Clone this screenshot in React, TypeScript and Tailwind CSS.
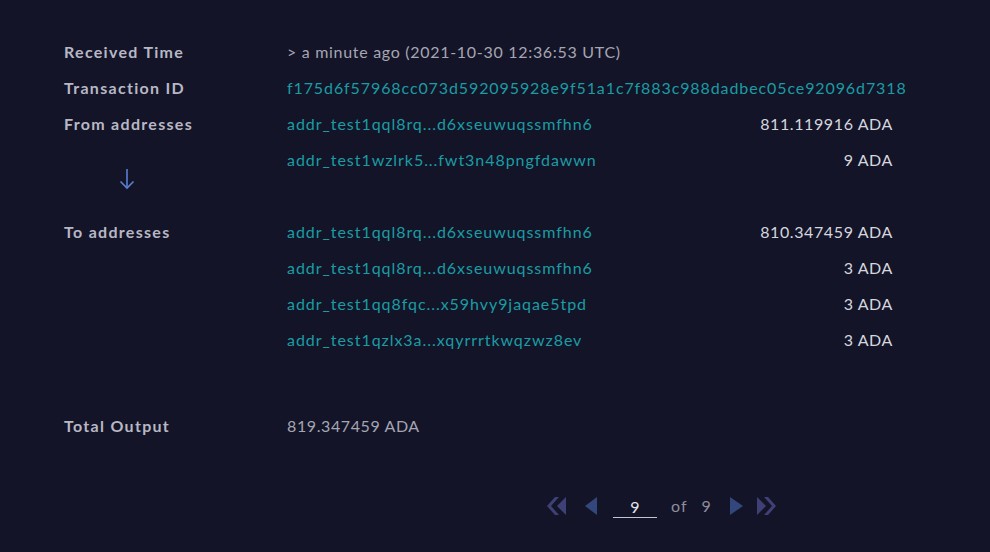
import React from "react";

const font = { fontFamily: "Lato, 'Open Sans', sans-serif" };

function Row({ addr, amount }: { addr: string; amount: string }) {
  return (
    <div className="flex h-9 items-center justify-between">
      <span className="text-[#1b9ca3] tracking-[0.95px]">{addr}</span>
      <span className="text-[#d6d6de] tracking-[0.6px]">{amount}</span>
    </div>
  );
}

function DoubleLeft() {
  return (
    <svg width="20" height="20" viewBox="0 0 20 20">
      <polygon points="9,1 13,1 5,10 13,19 9,19 1,10" fill="#3f4075" />
      <polygon points="11,10 20,1 20,19" fill="#3f4075" />
    </svg>
  );
}

function DoubleRight() {
  return (
    <svg width="20" height="20" viewBox="0 0 20 20">
      <polygon points="0,1 9,10 0,19" fill="#3f4075" />
      <polygon points="11,1 7,1 15,10 7,19 11,19 19,10" fill="#3f4075" />
    </svg>
  );
}

const label = "font-bold text-[#b8b8c4] tracking-[1.3px]";

export default function App() {
  return (
    <div className="min-h-[552px] w-full bg-[#131428] text-[16px]" style={font}>
      <div className="pl-16 pr-[97px] pt-[34px]">
        <div className="flex h-9 items-center">
          <div className={"w-[223px] " + label}>Received Time</div>
          <div className="text-[#a6a6b2] tracking-[0.7px]">&gt; a minute ago (2021-10-30 12:36:53 UTC)</div>
        </div>
        <div className="flex h-9 items-center">
          <div className={"w-[223px] shrink-0 " + label}>Transaction ID</div>
          <div className="whitespace-nowrap text-[#1b9ca3] tracking-[0.9px]">
            f175d6f57968cc073d592095928e9f51a1c7f883c988dadbec05ce92096d7318
          </div>
        </div>
        <div className="flex">
          <div className="w-[223px] shrink-0">
            <div className={"flex h-9 items-center " + label}>From addresses</div>
            <div className="h-[72px] pl-[55px] pt-[26px]">
              <svg width="16" height="22" viewBox="0 0 16 22" fill="none" stroke="#5a7fd0" strokeWidth="1.6">
                <line x1="8" y1="1" x2="8" y2="20" />
                <polyline points="1.5,13.5 8,20 14.5,13.5" />
              </svg>
            </div>
          </div>
          <div className="flex-1">
            <Row addr="addr_test1qql8rq...d6xseuwuqssmfhn6" amount="811.119916 ADA" />
            <Row addr="addr_test1wzlrk5...fwt3n48pngfdawwn" amount="9 ADA" />
          </div>
        </div>
        <div className="flex">
          <div className="w-[223px] shrink-0">
            <div className={"flex h-9 items-center " + label}>To addresses</div>
          </div>
          <div className="flex-1">
            <Row addr="addr_test1qql8rq...d6xseuwuqssmfhn6" amount="810.347459 ADA" />
            <Row addr="addr_test1qql8rq...d6xseuwuqssmfhn6" amount="3 ADA" />
            <Row addr="addr_test1qq8fqc...x59hvy9jaqae5tpd" amount="3 ADA" />
            <Row addr="addr_test1qzlx3a...xqyrrrtkwqzwz8ev" amount="3 ADA" />
          </div>
        </div>
        <div className="mt-[50px] flex h-9 items-center">
          <div className={"w-[223px] " + label}>Total Output</div>
          <div className="text-[#a6a6b2] tracking-[0.6px]">819.347459 ADA</div>
        </div>
        <div className="mt-[50px] flex items-center pl-[482px]">
          <DoubleLeft />
          <div className="ml-[19px]">
            <svg width="12" height="18" viewBox="0 0 12 18">
              <polygon points="12,0 12,18 0,9" fill="#34477c" />
            </svg>
          </div>
          <div className="ml-[16px] flex h-[24px] w-[44px] items-center justify-center border-b border-[#c4c4cc] pt-[2px] text-[#e6e6ee]">
            9
          </div>
          <span className="ml-[14px] text-[#8e8e9c] tracking-[1px]">of</span>
          <span className="ml-[14px] text-[#8e8e9c]">9</span>
          <div className="ml-[19px]">
            <svg width="13" height="18" viewBox="0 0 13 18">
              <polygon points="0,0 0,18 13,9" fill="#34477c" />
            </svg>
          </div>
          <div className="ml-[14px]">
            <DoubleRight />
          </div>
        </div>
      </div>
    </div>
  );
}
